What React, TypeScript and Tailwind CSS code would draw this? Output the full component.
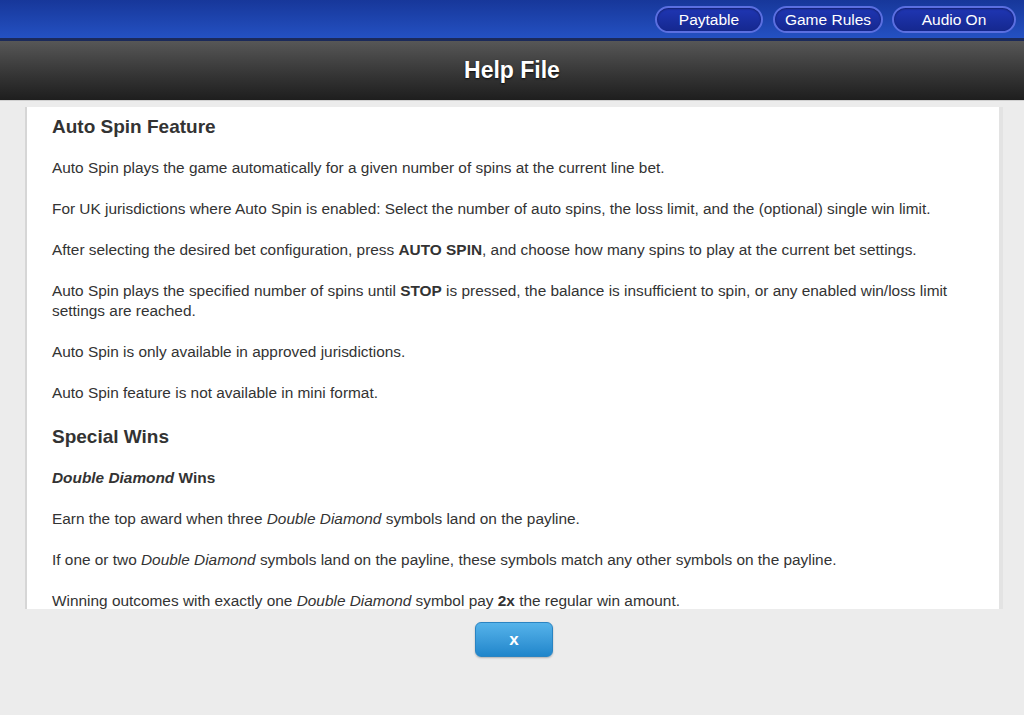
import React from "react"

const font = { fontFamily: '"Liberation Sans", Arial, sans-serif' }

const TopButton = ({ label, w }: { label: string; w: string }) => (
    <button
        className={`${w} h-[27px] rounded-full border-2 border-[#5b6fe0] bg-gradient-to-b from-[#1f36b4] to-[#15288f] text-white text-[15.5px] leading-none shadow-[inset_0_1px_2px_rgba(0,0,0,0.4)]`}
    >
        {label}
    </button>
)

const App: React.FC = () => {
    return (
        <div style={font} className="w-[1024px] h-[715px] flex flex-col bg-[#ececec] overflow-hidden">
            {/* top nav */}
            <div className="h-[38px] bg-gradient-to-b from-[#17379a] to-[#2451c2] flex items-center justify-end pr-[8px] pt-[1px]">
                <TopButton label="Paytable" w="w-[108px]" />
                <div className="w-[10px]" />
                <TopButton label="Game Rules" w="w-[110px]" />
                <div className="w-[9px]" />
                <TopButton label="Audio On" w="w-[124px]" />
            </div>
            <div className="h-[3px] bg-[#1b2a5a]" />

            {/* title bar */}
            <div className="h-[60px] bg-gradient-to-b from-[#575757] to-[#1e1e1e] flex items-center justify-center border-b border-[#d0d0d0]">
                <h1 className="text-white text-[23px] font-bold [text-shadow:0_1px_2px_rgba(0,0,0,0.8)]">Help File</h1>
            </div>

            {/* content panel */}
            <div className="ml-[25px] mt-[6px] w-[978px] h-[502px] bg-white border-l-2 border-[#d6d6d6] border-r-4 border-r-[#e3e3e3] overflow-hidden">
                <div className="pl-[25px] pr-[20px] pt-[7px] text-[#333] text-[15.4px] leading-[20px]">
                    <h2 className="text-[19px] font-bold leading-[26px] mb-[18px]">Auto Spin Feature</h2>
                    <p className="mb-[21px]">Auto Spin plays the game automatically for a given number of spins at the current line bet.</p>
                    <p className="mb-[21px]">For UK jurisdictions where Auto Spin is enabled: Select the number of auto spins, the loss limit, and the (optional) single win limit.</p>
                    <p className="mb-[21px]">After selecting the desired bet configuration, press <b>AUTO SPIN</b>, and choose how many spins to play at the current bet settings.</p>
                    <p className="mb-[21px]">Auto Spin plays the specified number of spins until <b>STOP</b> is pressed, the balance is insufficient to spin, or any enabled win/loss limit settings are reached.</p>
                    <p className="mb-[21px]">Auto Spin is only available in approved jurisdictions.</p>
                    <p className="mb-[21px]">Auto Spin feature is not available in mini format.</p>
                    <h2 className="text-[19px] font-bold leading-[26px] mb-[18px]">Special Wins</h2>
                    <p className="mb-[21px] font-bold"><i>Double Diamond</i> Wins</p>
                    <p className="mb-[21px]">Earn the top award when three <i>Double Diamond</i> symbols land on the payline.</p>
                    <p className="mb-[21px]">If one or two <i>Double Diamond</i> symbols land on the payline, these symbols match any other symbols on the payline.</p>
                    <p className="mb-[21px]">Winning outcomes with exactly one <i>Double Diamond</i> symbol pay <b>2x</b> the regular win amount.</p>
                </div>
            </div>

            {/* close */}
            <div className="flex justify-center mt-[13px] pl-[4px]">
                <button className="w-[78px] h-[35px] rounded-[6px] border border-[#2a84c2] bg-gradient-to-b from-[#55b3ea] to-[#1f86cb] text-white text-[17px] font-bold leading-none shadow-[0_1px_2px_rgba(0,0,0,0.25)]">
                    x
                </button>
            </div>
        </div>
    )
}

export default App
